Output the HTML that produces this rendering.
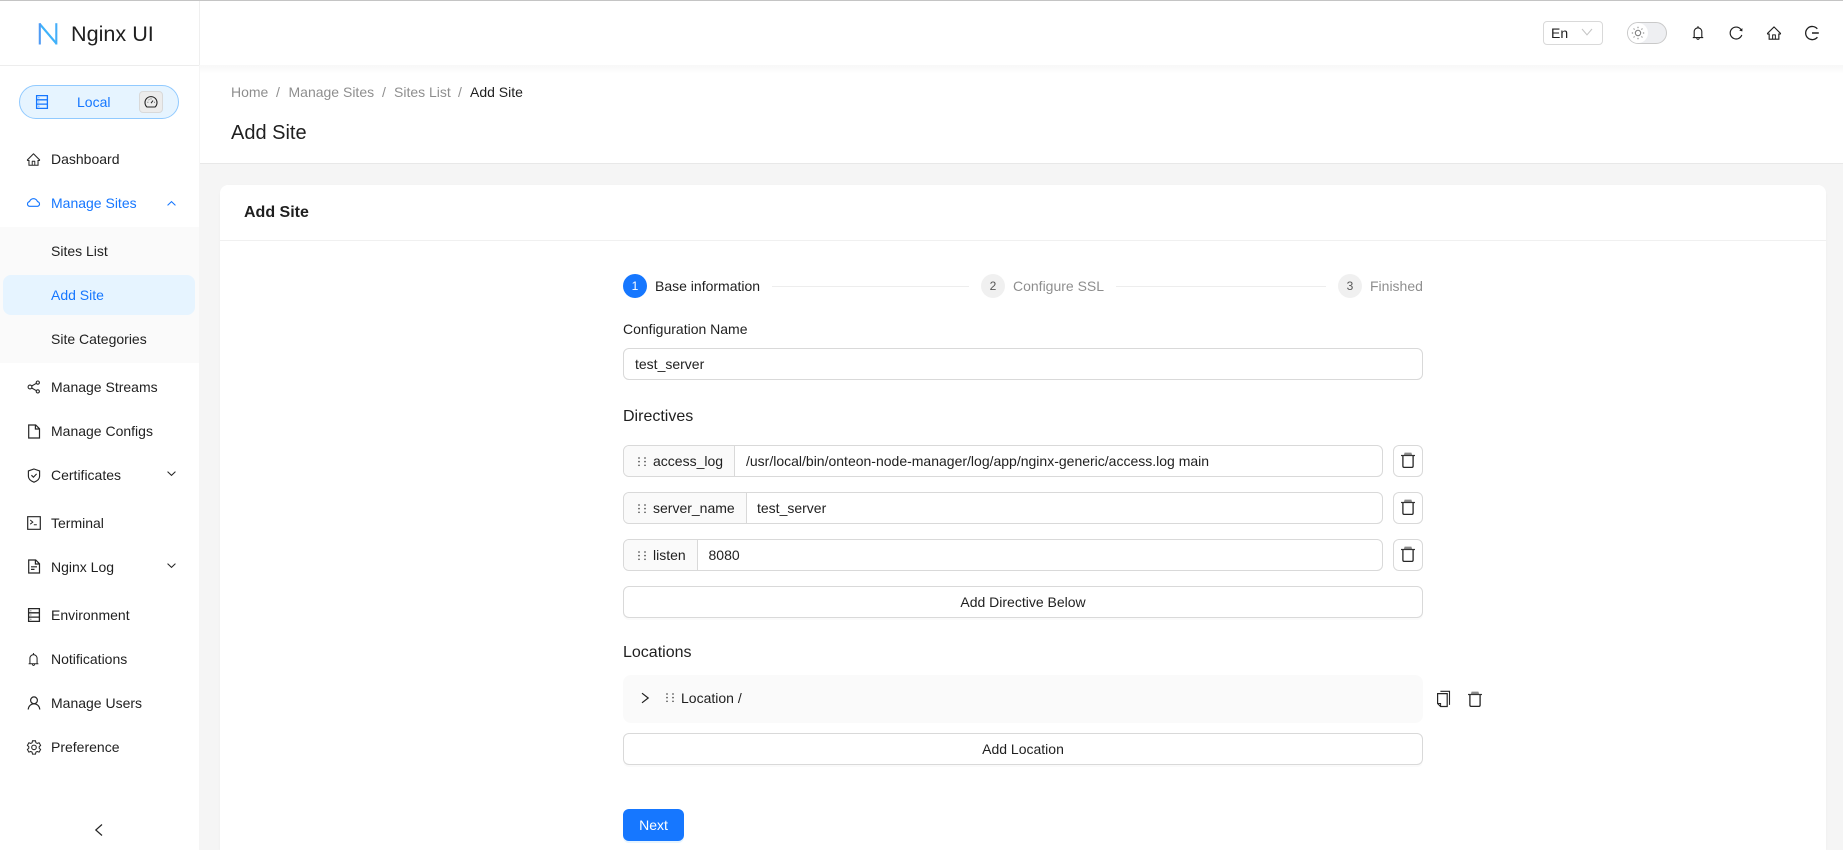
<!DOCTYPE html>
<html lang="en"><head><meta charset="utf-8"><title>Add Site | Nginx UI</title>
<style>
*{box-sizing:border-box}
html,body{margin:0;padding:0;width:1843px;height:850px;overflow:hidden;background:#f5f5f5;font-family:"Liberation Sans",sans-serif;font-size:14px;color:rgba(0,0,0,.88)}
.a{position:absolute}
.t{position:absolute;line-height:22px;height:22px;white-space:nowrap}
.i{position:absolute;display:block;overflow:visible}
.box{position:absolute;border:1px solid #d9d9d9;border-radius:6px;background:#fff}
.muted{color:rgba(0,0,0,.45)}
.blue{color:#1677ff}
.circle{position:absolute;width:24px;height:24px;border-radius:50%;background:rgba(0,0,0,.06);text-align:center;line-height:24px;font-size:12px;color:rgba(0,0,0,.65)}
.addon{position:absolute;left:0;top:0;bottom:0;background:#fafafa;border-right:1px solid #d9d9d9;border-radius:5px 0 0 5px}
</style></head><body>
<svg width="0" height="0" style="position:absolute"><defs>
<symbol id="home" viewBox="0 0 1024 1024"><path fill="currentColor" d="M946.5 505L560.1 118.8l-25.9-25.9a31.5 31.5 0 0 0-44.4 0L77.5 505a63.9 63.9 0 0 0-18.8 46c.4 35.2 29.7 63.3 64.9 63.3h42.5V940h691.8V614.3h43.4c17.1 0 33.2-6.7 45.3-18.8a63.6 63.6 0 0 0 18.7-45.3c0-17-6.7-33.1-18.8-45.2zM568 868H456V664h112v204zm217.9-325.7V868H632V640c0-22.1-17.9-40-40-40H432c-22.1 0-40 17.9-40 40v228H238.1V542.3h-96l370-369.7 23.1 23.1L882 542.3h-96.1z"/></symbol>
<symbol id="cloud" viewBox="0 0 1024 1024"><path fill="currentColor" d="M811.4 418.7C765.6 297.9 648.9 212 512.2 212S258.8 297.8 213 418.6C127.3 441.1 64 519.1 64 612c0 110.5 89.5 200 199.9 200h496.2C870.5 812 960 722.5 960 612c0-92.7-63.1-170.7-148.6-193.3zm36.3 281a123.07 123.07 0 0 1-87.6 36.3H263.9c-33.1 0-64.2-12.9-87.6-36.3A123.3 123.3 0 0 1 140 612c0-28 9.1-54.3 26.2-76.3a125.7 125.7 0 0 1 66.1-43.7l37.9-9.9 13.9-36.6c8.6-22.8 20.6-44.1 35.7-63.4a245.6 245.6 0 0 1 52.4-49.9c41.1-28.9 89.5-44.2 140-44.2s98.9 15.3 140 44.2c19.9 14 37.5 30.8 52.4 49.9 15.1 19.3 27.1 40.6 35.7 63.4l13.8 36.5 37.8 10c54.3 14.5 92.1 63.8 92.1 120 0 33.1-12.9 64.3-36.3 87.7z"/></symbol>
<symbol id="bell" viewBox="0 0 1024 1024"><path fill="currentColor" d="M816 768h-24V428c0-141.1-104.3-257.7-240-277.1V112c0-22.1-17.9-40-40-40s-40 17.9-40 40v38.9c-135.7 19.4-240 136-240 277.1v340h-24c-17.7 0-32 14.3-32 32v32c0 4.4 3.6 8 8 8h216c0 61.8 50.2 112 112 112s112-50.2 112-112h216c4.4 0 8-3.6 8-8v-32c0-17.7-14.3-32-32-32zM512 888c-26.5 0-48-21.5-48-48h96c0 26.5-21.5 48-48 48zM304 768V428c0-55.6 21.6-107.8 60.9-147.1S456.4 220 512 220c55.6 0 107.8 21.6 147.1 60.9S720 372.4 720 428v340H304z"/></symbol>
<symbol id="reload" viewBox="0 0 1024 1024"><path fill="currentColor" d="M909.1 209.3l-56.4 44.1C775.8 155.1 656.2 92 521.9 92 290 92 102.3 279.5 102 511.5 101.7 743.7 289.8 932 521.9 932c181.3 0 335.8-115 394.6-276.1 1.5-4.2-.7-8.9-4.9-10.3l-56.7-19.5a8 8 0 0 0-10.1 4.8c-1.8 5-3.8 10-5.9 14.9-17.3 41-42.1 77.8-73.7 109.4A344.77 344.77 0 0 1 655.9 829c-42.3 17.9-87.4 27-133.8 27-46.5 0-91.5-9.1-133.8-27A341.5 341.5 0 0 1 279 755.2a342.16 342.16 0 0 1-73.7-109.4c-17.9-42.4-27-87.4-27-133.9s9.1-91.5 27-133.9c17.3-41 42.1-77.8 73.7-109.4 31.6-31.6 68.4-56.4 109.3-73.8 42.3-17.9 87.4-27 133.8-27 46.5 0 91.5 9.1 133.8 27a341.5 341.5 0 0 1 109.3 73.8c9.9 9.9 19.2 20.4 27.8 31.4l-60.2 47a8 8 0 0 0 3 14.1l175.6 43c5 1.2 9.9-2.6 9.9-7.7l.8-180.9c-.1-6.6-7.8-10.3-13-6.2z"/></symbol>
<symbol id="del" viewBox="0 0 16 16"><path d="M4.6.6h6.800l.8 2.600H3.800z" fill="#8a8a8a"/><path d="M1 3.500h14" stroke="#333" stroke-width="1.200" fill="none"/><path d="M2.900 3.700v10.300c0 .9.6 1.400 1.400 1.400h7.400c.8 0 1.400-.5 1.400-1.400V3.700" fill="none" stroke="#262626" stroke-width="1.300"/></symbol>
<symbol id="dots" viewBox="0 0 8 12"><g fill="#555"><circle cx="1" cy="2" r=".85"/><circle cx="1" cy="5.600" r=".85"/><circle cx="1" cy="9.300" r=".85"/><circle cx="7" cy="2" r=".85"/><circle cx="7" cy="5.600" r=".85"/><circle cx="7" cy="9.300" r=".85"/></g></symbol>
<symbol id="server" viewBox="0 0 14 14"><path d="M1.600.6h10.800v12.800H1.600zM1.600 4.800h10.800M1.600 9.100h10.800M3.600 2.700h.6M3.600 7h.6M3.600 11.300h.6" fill="none" stroke="currentColor" stroke-width="1.300"/></symbol>
<symbol id="down" viewBox="0 0 12 8"><path d="M1.500 1.800L6 6.200l4.500-4.400" fill="none" stroke="currentColor" stroke-width="1.200"/></symbol>
</defs></svg>

<!-- top line -->
<div class="a" style="left:0;top:0;width:1843px;height:1px;background:#c4c4c4;z-index:5"></div>

<!-- header -->
<div class="a" style="left:200px;top:1px;width:1643px;height:64px;background:#fff"></div>
<div class="a" style="left:200px;top:65px;width:1643px;height:98px;background:#fff"></div>
<div class="a" style="left:200px;top:65px;width:1643px;height:9px;background:linear-gradient(#f7f7f7,#fff)"></div>
<div class="a" style="left:200px;top:163px;width:1643px;height:1px;background:#e8e8e8"></div>

<div class="box" style="left:1543px;top:21px;width:60px;height:24px;border-radius:4px"></div>
<div class="t" style="left:1551px;top:22px">En</div>
<svg class="i" style="left:1581px;top:28px" width="12" height="8" viewBox="0 0 12 8"><path d="M1 1l5 5.800L11 1" fill="none" stroke="#c4c4c4" stroke-width="1"/></svg>

<div class="a" style="left:1627px;top:22px;width:40px;height:22px;border-radius:11px;background:#eeeff2;border:1px solid #c9c9c9"></div>
<div class="a" style="left:1628px;top:23px;width:20px;height:20px;border-radius:50%;background:#fff"></div>
<svg class="i" style="left:1631px;top:26px;color:#777" width="14" height="14" viewBox="0 0 14 14"><circle cx="7" cy="7" r="2.700" fill="none" stroke="currentColor"/><path d="M7 .8v1.300M7 11.900v1.300M.8 7h1.300M11.900 7h1.300M2.600 2.600l.9.9M10.500 10.500l.9.9M2.600 11.400l.9-.9M10.500 3.500l.9-.9" stroke="currentColor" stroke-width=".9"/></svg>

<svg class="i" style="left:1690px;top:25px;color:#1f1f1f" width="16" height="16"><use href="#bell"/></svg>
<svg class="i" style="left:1728px;top:25px;color:#1f1f1f" width="16" height="16"><use href="#reload"/></svg>
<svg class="i" style="left:1766px;top:25px;color:#1f1f1f" width="16" height="16"><use href="#home"/></svg>
<svg class="i" style="left:1804px;top:25px;color:#1f1f1f" width="16" height="16" viewBox="0 0 16 16"><path d="M13.300 3.800a6.600 6.600 0 1 0 .1 8.400" fill="none" stroke="currentColor" stroke-width="1.300"/><path d="M8 8h6.800" stroke="currentColor" stroke-width="1.500"/></svg>

<!-- breadcrumb -->
<div class="t muted" style="left:231px;top:81px">Home</div>
<div class="t muted" style="left:276px;top:81px">/</div>
<div class="t muted" style="left:288.5px;top:81px">Manage Sites</div>
<div class="t muted" style="left:382px;top:81px">/</div>
<div class="t muted" style="left:394px;top:81px">Sites List</div>
<div class="t muted" style="left:458px;top:81px">/</div>
<div class="t" style="left:470px;top:81px">Add Site</div>
<div class="t" style="left:231px;top:122px;font-size:20px">Add Site</div>

<!-- card -->
<div class="a" style="left:220px;top:185px;width:1606px;height:665px;background:#fff;border-radius:8px 8px 0 0;box-shadow:0 1px 2px rgba(0,0,0,.03)"></div>
<div class="a" style="left:220px;top:240px;width:1606px;height:1px;background:#f0f0f0"></div>
<div class="t" style="left:244px;top:202px;font-size:16px;font-weight:700">Add Site</div>

<!-- steps -->
<div class="circle" style="left:623px;top:274px;background:#1677ff;color:#fff">1</div>
<div class="t" style="left:655px;top:275px">Base information</div>
<div class="a" style="left:772px;top:286px;width:197px;height:1px;background:#ededed"></div>
<div class="circle" style="left:981px;top:274px">2</div>
<div class="t muted" style="left:1013px;top:275px">Configure SSL</div>
<div class="a" style="left:1116px;top:286px;width:210px;height:1px;background:#ededed"></div>
<div class="circle" style="left:1338px;top:274px">3</div>
<div class="t muted" style="left:1370px;top:275px">Finished</div>

<!-- config name -->
<div class="t" style="left:623px;top:318px">Configuration Name</div>
<div class="box" style="left:623px;top:348px;width:800px;height:32px"></div>
<div class="t" style="left:635px;top:353px">test_server</div>
<div class="t" style="left:623px;top:406px;font-size:16px">Directives</div>

<!-- directive rows -->
<div class="box" style="left:623px;top:445px;width:760px;height:32px"><div class="addon" style="width:111px"></div></div>
<svg class="i" style="left:637.500px;top:456px" width="8" height="12"><use href="#dots"/></svg>
<div class="t" style="left:653px;top:450px">access_log</div>
<div class="t" style="left:746px;top:450px">/usr/local/bin/onteon-node-manager/log/app/nginx-generic/access.log main</div>
<div class="box" style="left:1393px;top:445px;width:30px;height:32px"></div>
<svg class="i" style="left:1400px;top:452px" width="16" height="16"><use href="#del"/></svg>

<div class="box" style="left:623px;top:492px;width:760px;height:32px"><div class="addon" style="width:123px"></div></div>
<svg class="i" style="left:637.500px;top:503px" width="8" height="12"><use href="#dots"/></svg>
<div class="t" style="left:653px;top:497px">server_name</div>
<div class="t" style="left:757px;top:497px">test_server</div>
<div class="box" style="left:1393px;top:492px;width:30px;height:32px"></div>
<svg class="i" style="left:1400px;top:499px" width="16" height="16"><use href="#del"/></svg>

<div class="box" style="left:623px;top:539px;width:760px;height:32px"><div class="addon" style="width:74px"></div></div>
<svg class="i" style="left:637.500px;top:550px" width="8" height="12"><use href="#dots"/></svg>
<div class="t" style="left:653px;top:544px">listen</div>
<div class="t" style="left:708.500px;top:544px">8080</div>
<div class="box" style="left:1393px;top:539px;width:30px;height:32px"></div>
<svg class="i" style="left:1400px;top:546px" width="16" height="16"><use href="#del"/></svg>

<div class="box" style="left:623px;top:586px;width:800px;height:32px;box-shadow:0 2px 0 rgba(0,0,0,.02)"></div>
<div class="t" style="left:623px;top:591px;width:800px;text-align:center">Add Directive Below</div>

<!-- locations -->
<div class="t" style="left:623px;top:642px;font-size:16px">Locations</div>
<div class="a" style="left:623px;top:675px;width:800px;height:48px;background:#fafafa;border-radius:8px"></div>
<svg class="i" style="left:640px;top:691px;color:#1f1f1f" width="10" height="14" viewBox="0 0 10 14"><path d="M2 2.200L8.200 7 2 11.800" fill="none" stroke="currentColor" stroke-width="1.200"/></svg>
<svg class="i" style="left:665.500px;top:692px" width="8" height="12"><use href="#dots"/></svg>
<div class="t" style="left:681px;top:687px">Location /</div>
<svg class="i" style="left:1436px;top:690px;color:#262626" width="15" height="18" viewBox="0 0 15 18"><path d="M4.400 1.300h9.100v13.600" fill="none" stroke="currentColor" stroke-width="1.100"/><path d="M1.600 3.600h9.600v12.900H4.600l-3-3z" fill="none" stroke="currentColor" stroke-width="1.200"/><path d="M1.600 13.500h3v3" fill="none" stroke="currentColor" stroke-width="1"/></svg>
<svg class="i" style="left:1467px;top:691px" width="16" height="16"><use href="#del"/></svg>

<div class="box" style="left:623px;top:733px;width:800px;height:32px;box-shadow:0 2px 0 rgba(0,0,0,.02)"></div>
<div class="t" style="left:623px;top:738px;width:800px;text-align:center">Add Location</div>

<div class="a" style="left:623px;top:809px;width:61px;height:32px;background:#1677ff;border-radius:6px;color:#fff;text-align:center;line-height:32px;box-shadow:0 2px 0 rgba(5,145,255,.1)">Next</div>

<!-- sidebar -->
<div class="a" style="left:0;top:1px;width:199px;height:849px;background:#fff"></div>
<div class="a" style="left:199px;top:1px;width:1px;height:64px;background:#efefef"></div>
<div class="a" style="left:0;top:65px;width:199px;height:1px;background:#ededed"></div>

<svg class="i" style="left:37px;top:21px" width="22" height="24" viewBox="0 0 22 24"><path d="M19.300 2.200V23.500" stroke="#45aef8" stroke-width="2.100" fill="none"/><path d="M2.600 2.800L19.400 22.600" stroke="#3fb2fa" stroke-width="2.200" fill="none"/><path d="M2.800 2.200V23.500" stroke="#4f9bf5" stroke-width="2.100" fill="none"/></svg>
<div class="t" style="left:71px;top:23px;font-size:21.600px">Nginx UI</div>

<div class="a" style="left:19px;top:85px;width:160px;height:34px;border-radius:17px;background:#e6f4ff;border:1px solid #91caff"></div>
<svg class="i blue" style="left:35px;top:95px" width="14" height="14"><use href="#server"/></svg>
<div class="t blue" style="left:77px;top:91px">Local</div>
<div class="a" style="left:139px;top:91px;width:24px;height:22px;border-radius:4px;background:#ececec;border:1px solid #d9d9d9"></div>
<svg class="i" style="left:144px;top:95px;color:#222" width="14" height="14" viewBox="0 0 14 14"><path d="M2.900 12A6 6 0 1 1 11.100 12z" fill="none" stroke="currentColor" stroke-width="1.100"/><path d="M7 8.200l2-2.600M3.600 7.200h.6M10 7.200h.6M4.800 4.600l.4.4M7 3.600v.6" stroke="currentColor"/></svg>

<!-- menu -->
<svg class="i" style="left:26px;top:152px;color:#262626" width="15" height="15"><use href="#home"/></svg>
<div class="t" style="left:51px;top:148px">Dashboard</div>

<svg class="i blue" style="left:26px;top:195px" width="15" height="15"><use href="#cloud"/></svg>
<div class="t blue" style="left:51px;top:192px">Manage Sites</div>
<svg class="i blue" style="left:166px;top:200px;transform:rotate(180deg)" width="11" height="7"><use href="#down"/></svg>

<div class="a" style="left:0;top:227px;width:199px;height:136px;background:#fafafa"></div>
<div class="t" style="left:51px;top:240px">Sites List</div>
<div class="a" style="left:3px;top:275px;width:192px;height:40px;background:#e6f4ff;border-radius:8px"></div>
<div class="t blue" style="left:51px;top:284px">Add Site</div>
<div class="t" style="left:51px;top:328px">Site Categories</div>

<svg class="i" style="left:27px;top:380px;color:#262626" width="14" height="14" viewBox="0 0 14 14"><circle cx="3" cy="7" r="1.900" fill="none" stroke="currentColor" stroke-width="1.100"/><circle cx="10.800" cy="2.600" r="1.600" fill="none" stroke="currentColor" stroke-width="1.100"/><circle cx="10.800" cy="11.400" r="1.600" fill="none" stroke="currentColor" stroke-width="1.100"/><path d="M4.700 6l4.700-2.700M4.700 8l4.700 2.700" stroke="currentColor" stroke-width="1.100"/></svg>
<div class="t" style="left:51px;top:376px">Manage Streams</div>

<svg class="i" style="left:27px;top:424px;color:#262626" width="14" height="15" viewBox="0 0 14 15"><path d="M1.700 1h7l3.800 3.800V14H1.700zM8.400 1v4h4.100" fill="none" stroke="currentColor" stroke-width="1.200"/></svg>
<div class="t" style="left:51px;top:420px">Manage Configs</div>

<svg class="i" style="left:27px;top:468px;color:#262626" width="14" height="15" viewBox="0 0 14 15"><path d="M7 1l5.600 1.900v5.300c0 2.800-2.600 4.800-5.600 6-3-1.200-5.600-3.200-5.600-6V2.900z" fill="none" stroke="currentColor" stroke-width="1.150"/><path d="M4.400 7.200l2 2 3.200-3.300" fill="none" stroke="currentColor" stroke-width="1.100"/></svg>
<div class="t" style="left:51px;top:464px">Certificates</div>
<svg class="i" style="left:166px;top:470px;color:#262626" width="11" height="7"><use href="#down"/></svg>

<svg class="i" style="left:27px;top:516px;color:#262626" width="14" height="14" viewBox="0 0 14 14"><path d="M.7.7h12.600v12.600H.7z" fill="none" stroke="currentColor" stroke-width="1.200"/><path d="M3.200 4l2.600 2.100-2.600 2.100M6.800 8.800h3" fill="none" stroke="currentColor"/></svg>
<div class="t" style="left:51px;top:512px">Terminal</div>

<svg class="i" style="left:27px;top:559px;color:#262626" width="14" height="15" viewBox="0 0 14 15"><path d="M1.700 1h7l3.800 3.800V14H1.700zM8.400 1v4h4.100M4 7.800h6M4 10.400h3.500" fill="none" stroke="currentColor" stroke-width="1.200"/></svg>
<div class="t" style="left:51px;top:556px">Nginx Log</div>
<svg class="i" style="left:166px;top:562px;color:#262626" width="11" height="7"><use href="#down"/></svg>

<svg class="i" style="left:27px;top:608px;color:#262626" width="14" height="14"><use href="#server"/></svg>
<div class="t" style="left:51px;top:604px">Environment</div>

<svg class="i" style="left:26px;top:652px;color:#262626" width="15" height="15"><use href="#bell"/></svg>
<div class="t" style="left:51px;top:648px">Notifications</div>

<svg class="i" style="left:27px;top:696px;color:#262626" width="14" height="14" viewBox="0 0 14 14"><circle cx="7" cy="4.300" r="3.400" fill="none" stroke="currentColor" stroke-width="1.200"/><path d="M1.200 13.500c.3-3.400 2.700-5.700 5.800-5.700s5.500 2.300 5.800 5.700" fill="none" stroke="currentColor" stroke-width="1.200"/></svg>
<div class="t" style="left:51px;top:692px">Manage Users</div>

<svg class="i" style="left:27px;top:740px;color:#262626" width="14" height="14" viewBox="0 0 14 14"><path d="M5.500.8h3l.4 1.900 1.300.7 1.900-.6 1.500 2.600-1.400 1.300v1.500l1.400 1.300-1.500 2.600-1.900-.6-1.300.7-.4 1.900h-3l-.4-1.900-1.300-.7-1.900.6L.4 9.500l1.400-1.300V6.700L.4 5.400l1.500-2.600 1.900.6 1.300-.7z" fill="none" stroke="currentColor" stroke-width="1.050"/><circle cx="7" cy="7.400" r="2.300" fill="none" stroke="currentColor" stroke-width="1.050"/></svg>
<div class="t" style="left:51px;top:736px">Preference</div>

<svg class="i" style="left:94px;top:823px;color:#262626" width="10" height="14" viewBox="0 0 10 14"><path d="M8 1.500L1.800 7 8 12.500" fill="none" stroke="currentColor" stroke-width="1.200"/></svg>
</body></html>
